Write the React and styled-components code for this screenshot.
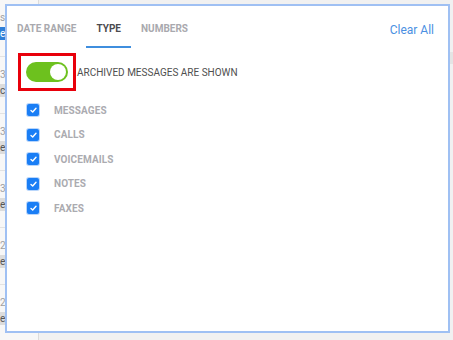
import styled, { createGlobalStyle } from 'styled-components';

const GlobalStyle = createGlobalStyle`
  html, body {
    margin: 0;
    padding: 0;
    background: #f1f1f1;
    font-family: Roboto, "Liberation Sans", sans-serif;
  }
  #root {
    width: 453px;
    height: 340px;
    overflow: hidden;
  }
`;

const Screen = styled.div`
  position: relative;
  display: flex;
  width: 453px;
  height: 340px;
  overflow: hidden;
`;

const Sidebar = styled.div`
  width: 38px;
  flex-shrink: 0;
  background: #f7f7f7;
  border-right: 1px solid #dcdcdc;
  overflow: hidden;
`;

const ListRow = styled.div`
  height: 57px;
  padding-top: 12px;
  box-sizing: border-box;
  border-bottom: 1px solid #e2e2e2;
  display: flex;
  flex-direction: column;
  gap: 3px;
  font-size: 10px;
  white-space: nowrap;
`;

const RowDate = styled.span`
  color: #a0a0a0;
  line-height: 12px;
`;

const RowChip = styled.span`
  align-self: flex-start;
  padding: 0 4px 0 0;
  height: 13px;
  line-height: 13px;
  background: ${(p) => (p.$active ? '#2f7fd8' : '#dcdcdc')};
  color: ${(p) => (p.$active ? '#fff' : '#555')};
`;

const Main = styled.div`
  flex: 1;
  display: flex;
  flex-direction: column;
`;

const MainTop = styled.div`
  height: 52px;
  background: #f1f1f1;
`;

const MainBar = styled.div`
  height: 12px;
  background: #e4e4e4;
`;

const Panel = styled.div`
  position: absolute;
  left: 5px;
  top: 4px;
  width: 445px;
  height: 329px;
  box-sizing: border-box;
  background: #fff;
  border: 2px solid #9fc0f3;
  display: flex;
  flex-direction: column;
`;

const Header = styled.div`
  display: flex;
  align-items: flex-start;
  justify-content: space-between;
  padding-right: 14px;
`;

const Tabs = styled.div`
  display: flex;
`;

const Tab = styled.div`
  padding: 16px 10px 10px;
  font-size: 10px;
  line-height: 14px;
  font-weight: 700;
  color: ${(p) => (p.$active ? '#4b4b4f' : '#a9a9ae')};
  border-bottom: 2px solid ${(p) => (p.$active ? '#3f8ede' : 'transparent')};
`;

const ClearAll = styled.div`
  padding-top: 17px;
  font-size: 12px;
  line-height: 14px;
  color: #4a90e2;
`;

const ToggleRow = styled.div`
  display: flex;
  align-items: center;
  margin: 5px 0 0 11px;
`;

const Highlight = styled.div`
  border: 3px solid #e8000b;
  padding: 6px 5px;
  display: flex;
`;

const Toggle = styled.div`
  width: 42px;
  height: 20px;
  border-radius: 10px;
  background: #6dc11e;
  display: flex;
  align-items: center;
  justify-content: ${(p) => (p.$on ? 'flex-end' : 'flex-start')};
  padding: 0 2px;
  box-sizing: border-box;
`;

const Knob = styled.div`
  width: 16px;
  height: 16px;
  border-radius: 50%;
  background: #fff;
`;

const ToggleLabel = styled.span`
  margin-left: 1px;
  font-size: 10px;
  color: #4f4f4f;
`;

const TypeList = styled.div`
  display: flex;
  flex-direction: column;
  margin: 7px 0 0 20px;
`;

const TypeRow = styled.label`
  height: 24.5px;
  display: flex;
  align-items: center;
  gap: 15px;
`;

const Box = styled.span`
  width: 12px;
  height: 12px;
  border-radius: 2px;
  background: #1a7ef5;
  box-shadow: 0 0 0 1px #b9d6fb;
  display: flex;
  align-items: center;
  justify-content: center;
`;

const TypeName = styled.span`
  font-size: 10px;
  font-weight: 700;
  color: #ababb0;
  letter-spacing: 0.01em;
`;

const Check = () => (
  <svg width="7" height="6" viewBox="0 0 7 6">
    <path d="M1 3.4 L2.7 5 L6 1.2" fill="none" stroke="#fff" strokeWidth="1.4" strokeLinecap="round" strokeLinejoin="round" />
  </svg>
);

const rows = [
  { date: 'st', chip: 'es', active: true },
  { date: '3/', chip: 'cc' },
  { date: '3/', chip: 'es' },
  { date: '3/', chip: 'es' },
  { date: '2/', chip: 'es' },
  { date: '2/', chip: 'es' },
];

const types = ['MESSAGES', 'CALLS', 'VOICEMAILS', 'NOTES', 'FAXES'];

export default function App() {
  return (
    <>
      <GlobalStyle />
      <Screen>
        <Sidebar>
          {rows.map((r, i) => (
            <ListRow key={i}>
              <RowDate>{r.date}</RowDate>
              <RowChip $active={r.active}>{r.chip}</RowChip>
            </ListRow>
          ))}
        </Sidebar>
        <Main>
          <MainTop />
          <MainBar />
        </Main>
        <Panel>
          <Header>
            <Tabs>
              <Tab>DATE RANGE</Tab>
              <Tab $active>TYPE</Tab>
              <Tab>NUMBERS</Tab>
            </Tabs>
            <ClearAll>Clear All</ClearAll>
          </Header>
          <ToggleRow>
            <Highlight>
              <Toggle $on>
                <Knob />
              </Toggle>
            </Highlight>
            <ToggleLabel>ARCHIVED MESSAGES ARE SHOWN</ToggleLabel>
          </ToggleRow>
          <TypeList>
            {types.map((t) => (
              <TypeRow key={t}>
                <Box>
                  <Check />
                </Box>
                <TypeName>{t}</TypeName>
              </TypeRow>
            ))}
          </TypeList>
        </Panel>
      </Screen>
    </>
  );
}
